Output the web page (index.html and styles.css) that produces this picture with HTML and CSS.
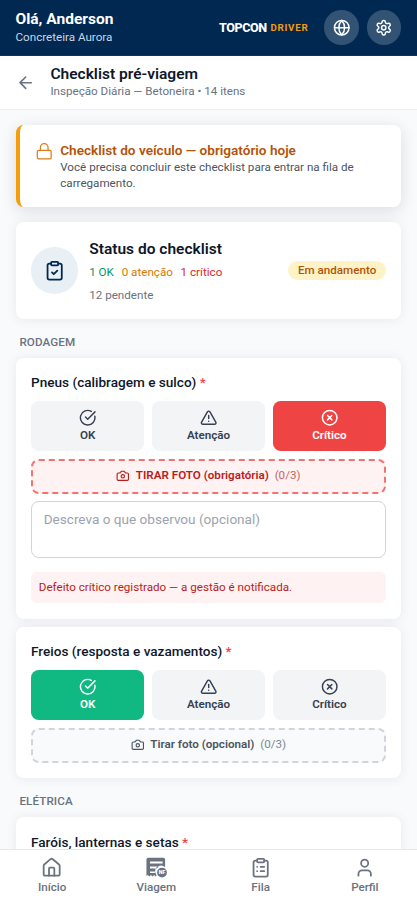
FILE: index.html
```html
<!DOCTYPE html>
<html lang="pt-BR">
<head>
<meta charset="utf-8">
<meta name="viewport" content="width=device-width, initial-scale=1">
<title>Checklist pré-viagem</title>
<link rel="stylesheet" href="styles.css">
</head>
<body>
<svg class="defs" aria-hidden="true">
  <symbol id="ok" viewBox="0 0 24 24"><path d="M21.801 10A10 10 0 1 1 17 3.335"/><path d="m9 11 3 3L22 4"/></symbol>
  <symbol id="warn" viewBox="0 0 24 24"><path d="m21.73 18-8-14a2 2 0 0 0-3.48 0l-8 14A2 2 0 0 0 4 21h16a2 2 0 0 0 1.73-3"/><path d="M12 9v4M12 17h.01"/></symbol>
  <symbol id="crit" viewBox="0 0 24 24"><circle cx="12" cy="12" r="10"/><path d="m15 9-6 6M9 9l6 6"/></symbol>
  <symbol id="camera" viewBox="0 0 24 24"><path d="M14.5 4h-5L7 7H4a2 2 0 0 0-2 2v9a2 2 0 0 0 2 2h16a2 2 0 0 0 2-2V9a2 2 0 0 0-2-2h-3z"/><circle cx="12" cy="13" r="3"/></symbol>
</svg>
<header class="topbar">
  <div class="user">
    <div class="user-name">Olá, Anderson</div>
    <div class="user-org">Concreteira Aurora</div>
  </div>
  <div class="brand"><span class="brand-main">TOPCON</span><span class="brand-sub">DRIVER</span></div>
  <button class="round" aria-label="Idioma"><svg class="i20" viewBox="0 0 24 24"><circle cx="12" cy="12" r="10"/><path d="M12 2a14.5 14.5 0 0 0 0 20 14.5 14.5 0 0 0 0-20M2 12h20"/></svg></button>
  <button class="round" aria-label="Ajustes"><svg class="i20" viewBox="0 0 24 24"><path d="M12.22 2h-.44a2 2 0 0 0-2 2v.18a2 2 0 0 1-1 1.73l-.43.25a2 2 0 0 1-2 0l-.15-.08a2 2 0 0 0-2.73.73l-.22.38a2 2 0 0 0 .73 2.73l.15.1a2 2 0 0 1 1 1.72v.51a2 2 0 0 1-1 1.74l-.15.09a2 2 0 0 0-.73 2.73l.22.38a2 2 0 0 0 2.73.73l.15-.08a2 2 0 0 1 2 0l.43.25a2 2 0 0 1 1 1.73V20a2 2 0 0 0 2 2h.44a2 2 0 0 0 2-2v-.18a2 2 0 0 1 1-1.73l.43-.25a2 2 0 0 1 2 0l.15.08a2 2 0 0 0 2.73-.73l.22-.39a2 2 0 0 0-.73-2.73l-.15-.08a2 2 0 0 1-1-1.74v-.5a2 2 0 0 1 1-1.74l.15-.09a2 2 0 0 0 .73-2.73l-.22-.38a2 2 0 0 0-2.73-.73l-.15.08a2 2 0 0 1-2 0l-.43-.25a2 2 0 0 1-1-1.73V4a2 2 0 0 0-2-2z"/><circle cx="12" cy="12" r="3"/></svg></button>
</header>
<div class="subbar">
  <svg class="i20 back" viewBox="0 0 24 24"><path d="m12 19-7-7 7-7M19 12H5"/></svg>
  <div>
    <h1>Checklist pré-viagem</h1>
    <p>Inspeção Diária — Betoneira • 14 itens</p>
  </div>
</div>
<main>
  <section class="card alert">
    <svg class="lock" viewBox="0 0 24 24"><rect x="3" y="11" width="18" height="11" rx="1.5"/><path d="M7 11V7a5 5 0 0 1 10 0v4"/></svg>
    <div>
      <h2>Checklist do veículo — obrigatório hoje</h2>
      <p>Você precisa concluir este checklist para entrar na fila de carregamento.</p>
    </div>
  </section>
  <section class="card status">
    <div class="status-icon"><svg class="i24" viewBox="0 0 24 24"><rect x="8" y="2" width="8" height="4" rx="1"/><path d="M16 4h2a2 2 0 0 1 2 2v14a2 2 0 0 1-2 2H6a2 2 0 0 1-2-2V6a2 2 0 0 1 2-2h2"/><path d="m9 14 2 2 4-4"/></svg></div>
    <div class="status-body">
      <h2>Status do checklist</h2>
      <div class="counts"><span class="c-ok">1 OK</span><span class="c-warn">0 atenção</span><span class="c-crit">1 crítico</span><span>12 pendente</span></div>
    </div>
    <span class="badge">Em andamento</span>
  </section>
  <h3>RODAGEM</h3>
  <section class="card item">
    <div class="item-title">Pneus (calibragem e sulco) <b>*</b></div>
    <div class="choices">
      <button><svg class="i20"><use href="#ok"/></svg>OK</button>
      <button><svg class="i20"><use href="#warn"/></svg>Atenção</button>
      <button class="is-crit"><svg class="i20"><use href="#crit"/></svg>Crítico</button>
    </div>
    <button class="photo required"><svg class="i14"><use href="#camera"/></svg>TIRAR FOTO (obrigatória)<span>(0/3)</span></button>
    <textarea placeholder="Descreva o que observou (opcional)"></textarea>
    <p class="notice">Defeito crítico registrado — a gestão é notificada.</p>
  </section>
  <section class="card item">
    <div class="item-title">Freios (resposta e vazamentos) <b>*</b></div>
    <div class="choices">
      <button class="is-ok"><svg class="i20"><use href="#ok"/></svg>OK</button>
      <button><svg class="i20"><use href="#warn"/></svg>Atenção</button>
      <button><svg class="i20"><use href="#crit"/></svg>Crítico</button>
    </div>
    <button class="photo"><svg class="i14"><use href="#camera"/></svg>Tirar foto (opcional)<span>(0/3)</span></button>
  </section>
  <h3>ELÉTRICA</h3>
  <section class="card item">
    <div class="item-title">Faróis, lanternas e setas <b>*</b></div>
  </section>
</main>
<nav>
  <a><svg class="i22" viewBox="0 0 24 24"><path d="M15 21v-8a1 1 0 0 0-1-1h-4a1 1 0 0 0-1 1v8"/><path d="M3 10a2 2 0 0 1 .709-1.528l7-5.999a2 2 0 0 1 2.582 0l7 5.999A2 2 0 0 1 21 10v9a2 2 0 0 1-2 2H5a2 2 0 0 1-2-2z"/></svg>Início</a>
  <a><svg class="i22 invoice" viewBox="0 0 24 24"><path fill-rule="evenodd" d="M2.500 .8h17a2 2 0 0 1 2 2v8.700a6.500 6.500 0 0 0-9.500 9l-1 1.500-1.800-1.700-1.800 1.700-1.800-1.700-1.800 1.700-1.800-1.700-1.500 1.200V2.800a2 2 0 0 1 2-2zM4.500 5v2.200h14.200V5zM4.500 10.800v2h7.500l2.500-2zM4.500 16.200v1.800h5.500v-1.800z"/><circle cx="18" cy="17.500" r="5.500"/><text x="18" y="19.600">NF</text></svg>Viagem</a>
  <a><svg class="i22" viewBox="0 0 24 24"><rect x="8" y="2" width="8" height="4" rx="1"/><path d="M16 4h2a2 2 0 0 1 2 2v14a2 2 0 0 1-2 2H6a2 2 0 0 1-2-2V6a2 2 0 0 1 2-2h2M12 11h4M12 16h4M8 11h.01M8 16h.01"/></svg>Fila</a>
  <a><svg class="i22" viewBox="0 0 24 24"><path d="M19 21v-2a4 4 0 0 0-4-4H9a4 4 0 0 0-4 4v2"/><circle cx="12" cy="7" r="4"/></svg>Perfil</a>
</nav>
</body>
</html>
```
FILE: styles.css
```css
* { box-sizing: border-box; margin: 0; padding: 0; }
html { height: 100%; overflow: hidden; }
body {
  zoom: 0.97;
  height: 100%;
  display: flex;
  flex-direction: column;
  overflow: hidden;
  background: #f8fafc;
  color: #0f172a;
  font-family: Roboto, sans-serif;
  font-size: 12px;
  line-height: 16px;
}
button, textarea { font: inherit; border: 0; }
svg { fill: none; stroke: currentColor; stroke-width: 2; stroke-linecap: round; stroke-linejoin: round; flex: none; display: block; }
.defs { width: 0; height: 0; position: absolute; }
.i14 { width: 14px; height: 14px; }
.i20 { width: 20px; height: 20px; }
.i22 { width: 22px; height: 22px; }
.i24 { width: 24px; height: 24px; }

.topbar { flex: none; height: 58px; padding: 0 16px; display: flex; align-items: center; gap: 8px; background: #002851; border-bottom: 1px solid #0b3260; color: #fff; }
.user { flex: 1; }
.user-name { font-size: 16px; font-weight: 700; line-height: 20px; }
.user-org { color: #cbd5e1; }
.brand { display: flex; align-items: center; gap: 4px; margin-right: 8px; }
.brand-main { font-size: 13px; font-weight: 800; letter-spacing: -0.5px; }
.brand-sub { font-size: 10px; font-weight: 700; letter-spacing: 0.8px; color: #f59e0b; }
.round { width: 36px; height: 36px; border-radius: 50%; display: grid; place-items: center; background: #335374; color: #fff; }
.round svg { width: 18px; height: 18px; }

.subbar { flex: none; height: 55px; padding: 9px 16px 0; display: flex; gap: 16px; background: #fff; border-bottom: 1px solid #eef0f3; }
.back { margin-top: 8px; color: #6b7280; }
h1 { font-size: 16px; font-weight: 600; line-height: 20px; }
.subbar p { color: #6b7280; }

main { flex: 1; min-height: 0; overflow: hidden; padding: 16px; }
.card { background: #fff; border-radius: 8px; padding: 16px; box-shadow: 0 1px 12px rgba(15, 23, 42, 0.07); }
.alert { display: flex; gap: 7px; border-left: 4.15px solid #f59e0b; box-shadow: 0 4px 16px rgba(15, 23, 42, 0.12); margin-bottom: 16px; }
.lock { color: #e07b1a; width: 19px; height: 19px; margin-top: 1px; stroke-width: 1.6; }
.alert h2 { font-size: 14px; font-weight: 600; line-height: 20px; color: #b45309; }
.alert p { color: #4b5563; }

.status { display: flex; align-items: center; gap: 12px; }
.status-icon { width: 48px; height: 48px; flex: none; border-radius: 50%; display: grid; place-items: center; background: #e8eff5; color: #002851; }
.status-icon svg { width: 22px; height: 22px; }
.status-body { flex: 1; }
.status h2 { font-size: 16px; font-weight: 600; line-height: 24px; margin-bottom: 4px; }
.counts { display: flex; flex-wrap: wrap; gap: 8px; color: #6b7280; }
.c-ok { color: #059669; }
.c-warn { color: #d97706; }
.c-crit { color: #dc2626; }
.badge { flex: none; padding: 2px 10px; border-radius: 10px; background: #fef3c7; color: #b45309; font-weight: 500; }

h3 { font-size: 12px; font-weight: 500; line-height: 16px; color: #6b7280; margin: 16px 4px 8px; letter-spacing: 0.1px; }
.item + .item { margin-top: 8.5px; }
.item-title { font-size: 14px; font-weight: 500; line-height: 20px; margin-bottom: 8px; }
.item-title b { color: #ef4444; font-weight: 500; }
.choices { display: grid; grid-template-columns: repeat(3, 1fr); gap: 8px; }
.choices button { height: 52px; border-radius: 8px; display: flex; flex-direction: column; align-items: center; justify-content: center; background: #f3f4f6; color: #374151; font-weight: 600; }
.choices svg { padding: 1px; }
.choices .is-crit { background: #ef4444; color: #fff; }
.choices .is-ok { background: #10b981; color: #fff; }
.photo { width: 100%; height: 36px; margin-top: 8px; display: flex; align-items: center; justify-content: center; gap: 6px; border: 2.08px dashed #d1d5db; border-radius: 8px; background: #f9fafb; color: #4b5563; font-weight: 600; }
.photo span { font-weight: 400; opacity: 0.7; }
.photo.required { border-color: #f87171; background: #fef2f2; color: #b91c1c; }
textarea { display: block; width: 100%; height: 58px; margin-top: 8px; padding: 8px 12px; border: 1px solid #d1d5db; border-radius: 8px; resize: none; font-size: 14px; line-height: 20px; }
textarea::placeholder { color: #9ca3af; }
.notice { margin-top: 15px; padding: 8px; border-radius: 6px; background: #fef2f2; color: #b91c1c; }

nav { flex: none; height: 57px; display: grid; grid-template-columns: repeat(4, 1fr); background: #fff; border-top: 1px solid #e5e7eb; z-index: 1; }
nav a { display: flex; flex-direction: column; align-items: center; padding-top: 8px; color: #6b7280; font-weight: 500; }
nav a svg { margin-bottom: 1px; }
.invoice { fill: currentColor; stroke: none; }
.invoice text { fill: #fff; font-size: 6px; font-weight: 900; text-anchor: middle; }
```
